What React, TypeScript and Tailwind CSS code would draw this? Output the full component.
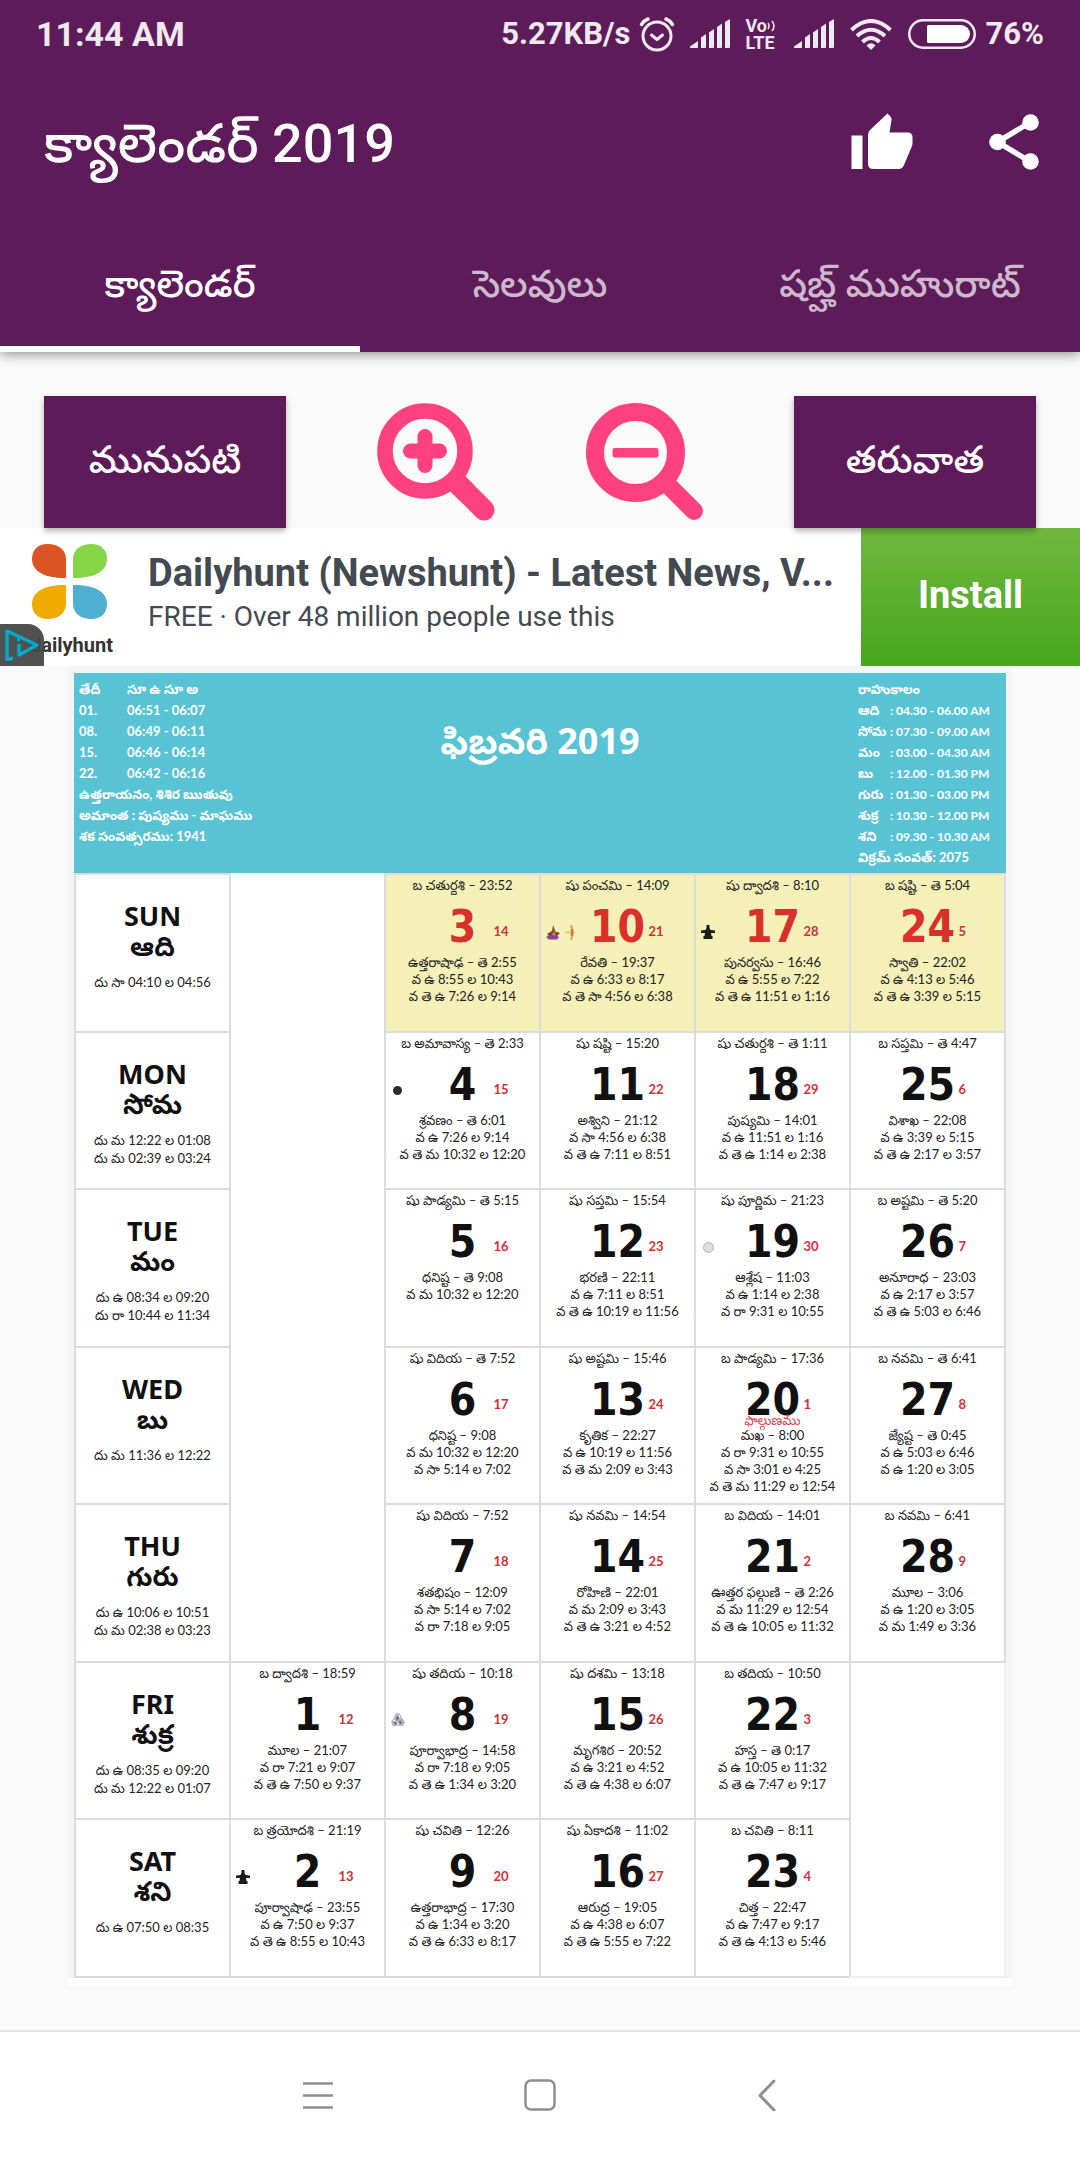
import type { ReactNode } from "react";

type Day = {
  n: number;
  sub: number;
  tithi: string;
  lines: string[];
  festival?: string;
  icon?: ReactNode;
};
type Week = { en: string; te: string; times: string[]; days: Day[] };

function Signal() {
  return (
    <svg className="h-[30px] w-10" viewBox="0 0 40 30" fill="currentColor" aria-hidden="true">
      <path d="M0 29v-1.500L8 22v6q0 1-1 1zM11 18.500l5-3.500v13q0 1-1 1h-4zM19 13.500l5-3.500v18q0 1-1 1h-4zM27 8l5-3.500V28q0 1-1 1h-4zM35 3l5-3v28q0 1-1 1h-4z" />
    </svg>
  );
}

function Lingam() {
  return (
    <svg className="size-[14px]" viewBox="0 0 14 14" fill="#1b1b1b" aria-hidden="true">
      <path d="M5.500 0h3v3l1 2 4.500.5v2.500H10l.5 3h1V14H2.500v-3h1L4 8H0V5.500L4.500 5l1-2z" />
    </svg>
  );
}

function Goddess() {
  return (
    <>
      <svg className="size-[15px]" viewBox="0 0 15 15" aria-hidden="true">
        <path d="M7 0l2 5 1 5H5l1-5z" fill="#8a5a3a" />
        <path d="M1 9l5-3 5 1 3 1-3 3H3z" fill="#6b4a3c" />
        <path d="M0 12q7-5 13 0l-2 2.500H3z" fill="#8d3f98" />
        <circle cx="8" cy="9" r="1.800" fill="#e0762c" />
      </svg>
      <svg className="ml-1 h-[15px] w-3" viewBox="0 0 12 15" fill="none" aria-hidden="true">
        <path d="M6 0q3 7 0 15" stroke="#e2a552" strokeWidth="2" />
        <path d="M0 7.500h10" stroke="#e9c06b" strokeWidth="1.500" />
        <path d="M7 4v7" stroke="#c97f3c" strokeWidth="2.500" />
      </svg>
    </>
  );
}

function NewMoon() {
  return <span className="mx-0.5 size-[9px] rounded-full bg-[#2b2b2b]" />;
}

function FullMoon() {
  return <span className="ml-0.5 size-[11px] rounded-full border border-[#b5b5b5] bg-[#dedede]" />;
}

function MoonSighting() {
  return (
    <svg className="size-[14px]" viewBox="0 0 14 14" aria-hidden="true">
      <path d="M5 0l4 1 2 4 3 4-2 4H2L0 9l3-4z" fill="#aeb4bc" />
      <path d="M6 3l2 2-3 3zM9 7l2 4-3-1zM3 9l3 1-2 2z" fill="#555e6b" />
      <path d="M8 2l1 3M2 8l3-1M7 9v4" stroke="#f3f4f6" />
    </svg>
  );
}

const weeks: Week[] = [
  {
    en: "SUN",
    te: "ఆది",
    times: ["దు సా 04:10 ల 04:56"],
    days: [
      { n: 3, sub: 14, tithi: "బ చతుర్దశి – 23:52", lines: ["ఉత్తరాషాఢ – తె 2:55", "వ ఉ 8:55 ల 10:43", "వ తె ఉ 7:26 ల 9:14"] },
      { n: 10, sub: 21, tithi: "షు పంచమి – 14:09", lines: ["రేవతి – 19:37", "వ ఉ 6:33 ల 8:17", "వ తె సా 4:56 ల 6:38"], icon: <Goddess /> },
      { n: 17, sub: 28, tithi: "షు ద్వాదశి – 8:10", lines: ["పునర్వసు – 16:46", "వ ఉ 5:55 ల 7:22", "వ తె ఉ 11:51 ల 1:16"], icon: <Lingam /> },
      { n: 24, sub: 5, tithi: "బ షష్టి – తె 5:04", lines: ["స్వాతి – 22:02", "వ ఉ 4:13 ల 5:46", "వ తె ఉ 3:39 ల 5:15"] },
    ],
  },
  {
    en: "MON",
    te: "సోమ",
    times: ["దు మ 12:22 ల 01:08", "దు మ 02:39 ల 03:24"],
    days: [
      { n: 4, sub: 15, tithi: "బ అమావాస్య – తె 2:33", lines: ["శ్రవణం – తె 6:01", "వ ఉ 7:26 ల 9:14", "వ తె మ 10:32 ల 12:20"], icon: <NewMoon /> },
      { n: 11, sub: 22, tithi: "షు షష్టి – 15:20", lines: ["అశ్విని – 21:12", "వ సా 4:56 ల 6:38", "వ తె ఉ 7:11 ల 8:51"] },
      { n: 18, sub: 29, tithi: "షు చతుర్దశి – తె 1:11", lines: ["పుష్యమి – 14:01", "వ ఉ 11:51 ల 1:16", "వ తె ఉ 1:14 ల 2:38"] },
      { n: 25, sub: 6, tithi: "బ సప్తమి – తె 4:47", lines: ["విశాఖ – 22:08", "వ ఉ 3:39 ల 5:15", "వ తె ఉ 2:17 ల 3:57"] },
    ],
  },
  {
    en: "TUE",
    te: "మం",
    times: ["దు ఉ 08:34 ల 09:20", "దు రా 10:44 ల 11:34"],
    days: [
      { n: 5, sub: 16, tithi: "షు పాడ్యమి – తె 5:15", lines: ["ధనిష్ట – తె 9:08", "వ మ 10:32 ల 12:20"] },
      { n: 12, sub: 23, tithi: "షు సప్తమి – 15:54", lines: ["భరణి – 22:11", "వ ఉ 7:11 ల 8:51", "వ తె ఉ 10:19 ల 11:56"] },
      { n: 19, sub: 30, tithi: "షు పూర్ణిమ – 21:23", lines: ["ఆశ్లేష – 11:03", "వ ఉ 1:14 ల 2:38", "వ రా 9:31 ల 10:55"], icon: <FullMoon /> },
      { n: 26, sub: 7, tithi: "బ అష్టమి – తె 5:20", lines: ["అనూరాధ – 23:03", "వ ఉ 2:17 ల 3:57", "వ తె ఉ 5:03 ల 6:46"] },
    ],
  },
  {
    en: "WED",
    te: "బు",
    times: ["దు మ 11:36 ల 12:22"],
    days: [
      { n: 6, sub: 17, tithi: "షు విదియ – తె 7:52", lines: ["ధనిష్ట – 9:08", "వ మ 10:32 ల 12:20", "వ సా 5:14 ల 7:02"] },
      { n: 13, sub: 24, tithi: "షు అష్టమి – 15:46", lines: ["కృతిక – 22:27", "వ ఉ 10:19 ల 11:56", "వ తె మ 2:09 ల 3:43"] },
      { n: 20, sub: 1, tithi: "బ పాడ్యమి – 17:36", festival: "ఫాల్గుణము", lines: ["మఖ – 8:00", "వ రా 9:31 ల 10:55", "వ సా 3:01 ల 4:25", "వ తె మ 11:29 ల 12:54"] },
      { n: 27, sub: 8, tithi: "బ నవమి – తె 6:41", lines: ["జ్యేష్ట – తె 0:45", "వ ఉ 5:03 ల 6:46", "వ ఉ 1:20 ల 3:05"] },
    ],
  },
  {
    en: "THU",
    te: "గురు",
    times: ["దు ఉ 10:06 ల 10:51", "దు మ 02:38 ల 03:23"],
    days: [
      { n: 7, sub: 18, tithi: "షు విదియ – 7:52", lines: ["శతభిషం – 12:09", "వ సా 5:14 ల 7:02", "వ రా 7:18 ల 9:05"] },
      { n: 14, sub: 25, tithi: "షు నవమి – 14:54", lines: ["రోహిణి – 22:01", "వ మ 2:09 ల 3:43", "వ తె ఉ 3:21 ల 4:52"] },
      { n: 21, sub: 2, tithi: "బ విదియ – 14:01", lines: ["ఊత్తర ఫల్గుణి – తె 2:26", "వ మ 11:29 ల 12:54", "వ తె ఉ 10:05 ల 11:32"] },
      { n: 28, sub: 9, tithi: "బ నవమి – 6:41", lines: ["మూల – 3:06", "వ ఉ 1:20 ల 3:05", "వ మ 1:49 ల 3:36"] },
    ],
  },
  {
    en: "FRI",
    te: "శుక్ర",
    times: ["దు ఉ 08:35 ల 09:20", "దు మ 12:22 ల 01:07"],
    days: [
      { n: 1, sub: 12, tithi: "బ ద్వాదశి – 18:59", lines: ["మూల – 21:07", "వ రా 7:21 ల 9:07", "వ తె ఉ 7:50 ల 9:37"] },
      { n: 8, sub: 19, tithi: "షు తదియ – 10:18", lines: ["పూర్వాభాద్ర – 14:58", "వ రా 7:18 ల 9:05", "వ తె ఉ 1:34 ల 3:20"], icon: <MoonSighting /> },
      { n: 15, sub: 26, tithi: "షు దశమి – 13:18", lines: ["మృగశిర – 20:52", "వ ఉ 3:21 ల 4:52", "వ తె ఉ 4:38 ల 6:07"] },
      { n: 22, sub: 3, tithi: "బ తదియ – 10:50", lines: ["హస్త – తె 0:17", "వ ఉ 10:05 ల 11:32", "వ తె ఉ 7:47 ల 9:17"] },
    ],
  },
  {
    en: "SAT",
    te: "శని",
    times: ["దు ఉ 07:50 ల 08:35"],
    days: [
      { n: 2, sub: 13, tithi: "బ త్రయోదశి – 21:19", lines: ["పూర్వాషాఢ – 23:55", "వ ఉ 7:50 ల 9:37", "వ తె ఉ 8:55 ల 10:43"], icon: <Lingam /> },
      { n: 9, sub: 20, tithi: "షు చవితి – 12:26", lines: ["ఉత్తరాభాద్ర – 17:30", "వ ఉ 1:34 ల 3:20", "వ తె ఉ 6:33 ల 8:17"] },
      { n: 16, sub: 27, tithi: "షు ఏకాదశి – 11:02", lines: ["ఆరుద్ర – 19:05", "వ ఉ 4:38 ల 6:07", "వ తె ఉ 5:55 ల 7:22"] },
      { n: 23, sub: 4, tithi: "బ చవితి – 8:11", lines: ["చిత్త – 22:47", "వ ఉ 7:47 ల 9:17", "వ తె ఉ 4:13 ల 5:46"] },
    ],
  },
];

const sunTimes = [
  ["తేదీ", "సూ ఉ సూ అ"],
  ["01.", "06:51 - 06:07"],
  ["08.", "06:49 - 06:11"],
  ["15.", "06:46 - 06:14"],
  ["22.", "06:42 - 06:16"],
];

const rahu = [
  ["ఆది", ": 04.30 - 06.00 AM"],
  ["సోమ", ": 07.30 - 09.00 AM"],
  ["మం", ": 03.00 - 04.30 AM"],
  ["బు", ": 12.00 - 01.30 PM"],
  ["గురు", ": 01.30 - 03.00 PM"],
  ["శుక్ర", ": 10.30 - 12.00 PM"],
  ["శని", ": 09.30 - 10.30 AM"],
];

function DayCell({ day, sunday }: { day: Day; sunday: boolean }) {
  return (
    <td className={sunday ? "border-2 border-[#dcdcdc] bg-[#f5f0b8] p-0 align-top" : "border-2 border-[#dcdcdc] p-0 align-top"}>
      <div className="pt-0.5 text-center">
        <p className="whitespace-nowrap leading-[17px]">{day.tithi}</p>
        <div className="relative mt-2.5 grid h-[46px] grid-cols-[1fr_62px_1fr] items-center">
          <span className="flex items-center pt-2.5 pl-[5px]">{day.icon}</span>
          <span
            className={
              sunday
                ? "font-['DejaVu_Sans_Condensed','DejaVu_Sans',sans-serif] text-[44px] leading-[46px] font-bold text-[#d9302a]"
                : "font-['DejaVu_Sans_Condensed','DejaVu_Sans',sans-serif] text-[44px] leading-[46px] font-bold text-[#111]"
            }
          >
            {day.n}
          </span>
          <span className="pt-2.5 text-left font-bold text-[#d22f37]">{day.sub}</span>
          {day.festival && (
            <span className="absolute inset-x-0 top-[35px] leading-[17px] text-[#e0414a]">{day.festival}</span>
          )}
        </div>
        <div className="mt-1 whitespace-nowrap leading-[17px]">
          {day.lines.map((l) => (
            <p key={l}>{l}</p>
          ))}
        </div>
      </div>
    </td>
  );
}

function Calendar() {
  return (
    <section className="mx-[68px] bg-[#f5f5f5] px-1.5 pt-[7px] font-['Lato','Noto_Sans_Telugu',sans-serif] text-[13px] text-[#222]">
      <div className="grid h-[200px] grid-cols-[1fr_auto_1fr] bg-[#59c3d6] pt-1.5 font-bold leading-[21px] text-white">
        <div className="pl-[5px] whitespace-nowrap">
          {sunTimes.map(([a, b]) => (
            <div key={a} className="grid grid-cols-[48px_1fr]">
              <span>{a}</span>
              <span>{b}</span>
            </div>
          ))}
          <p>ఉత్తరాయనం, శిశిర ఋతువు</p>
          <p>అమాంత : పుష్యము - మాఘము</p>
          <p>శక సంవత్సరము: 1941</p>
        </div>
        <h2 className="pt-10 font-['Noto_Sans','Noto_Sans_Telugu',sans-serif] text-[36px] leading-[44px] font-bold">
          ఫిబ్రవరి 2019
        </h2>
        <div className="w-[148px] justify-self-end whitespace-nowrap">
          <p>రాహుకాలం</p>
          {rahu.map(([a, b]) => (
            <div key={a} className="grid grid-cols-[32px_1fr]">
              <span>{a}</span>
              <span className="text-[12px]">{b}</span>
            </div>
          ))}
          <p>విక్రమ్ సంవత్: 2075</p>
        </div>
      </div>
      <table className="w-full table-fixed border-collapse bg-white">
        <tbody>
          {weeks.map((w, i) => (
            <tr key={w.en}>
              <th scope="row" className="border-2 border-[#dcdcdc] p-0 align-top font-normal">
                <div className={i % 2 === 0 ? "flex h-[156px] flex-col items-center pt-[26px]" : "flex h-[155px] flex-col items-center pt-[26px]"}>
                  <span className="font-['Noto_Sans','Noto_Sans_Telugu',sans-serif] text-[27px] leading-[30px] font-bold text-[#111]">
                    {w.en}
                  </span>
                  <span className="font-['Noto_Sans','Noto_Sans_Telugu',sans-serif] text-[27px] leading-[30px] font-bold text-[#111]">
                    {w.te}
                  </span>
                  <div className="pt-3 whitespace-nowrap leading-[18px]">
                    {w.times.map((t) => (
                      <p key={t}>{t}</p>
                    ))}
                  </div>
                </div>
              </th>
              {i === 0 && <td rowSpan={5} className="p-0" />}
              {w.days.map((d) => (
                <DayCell key={d.n} day={d} sunday={i === 0} />
              ))}
              {i === 5 && <td rowSpan={2} className="border-r-2 border-b-2 border-[#efefef] p-0" />}
            </tr>
          ))}
        </tbody>
      </table>
      <div className="-mx-1.5 h-2 bg-white" />
    </section>
  );
}

function Petal({ className }: { className: string }) {
  return (
    <svg className={className} viewBox="0 0 34 34" fill="currentColor" aria-hidden="true">
      <path d="M33 34Q34 34 34 33V15C34 5 25 0 16 0C6 0 0 6 0 15C0 27 12 34 33 34Z" />
    </svg>
  );
}

export default function App() {
  return (
    <div className="flex min-h-screen flex-col bg-[#fafafa] font-['Roboto','Noto_Sans_Telugu',sans-serif]">
      <header className="z-10 bg-[#5d1c59] text-white shadow-[0_2px_12px_rgba(0,0,0,0.45)]">
        <div className="flex h-[68px] items-center justify-between px-9 font-bold text-[#efe8ee]">
          <span className="text-[34px]">11:44 AM</span>
          <div className="flex items-center text-[31px]">
            <span>5.27KB/s</span>
            <svg className="ml-2 h-9 w-9" viewBox="0 0 36 36" fill="none" stroke="currentColor" strokeWidth="3" strokeLinecap="round" strokeLinejoin="round" aria-hidden="true">
              <circle cx="18" cy="20" r="14" />
              <path d="M12.500 19l5.500 4.500 5.500-4.500" />
              <path d="M2.500 8.500Q5 4.500 9 3M33.500 8.500Q31 4.500 27 3" strokeWidth="3.500" />
            </svg>
            <span className="ml-[15px]">
              <Signal />
            </span>
            <div className="ml-4 flex w-8 flex-col text-[18px] leading-[17px]">
              <span className="flex items-center">
                Vo
                <svg className="h-3 w-2" viewBox="0 0 8 12" fill="none" stroke="currentColor" strokeWidth="1.500" aria-hidden="true">
                  <path d="M1 3q2 3 0 6M5 1q4 5 0 10" />
                </svg>
              </span>
              <span>LTE</span>
            </div>
            <span className="ml-4">
              <Signal />
            </span>
            <svg className="ml-4 h-[31px] w-[42px]" viewBox="0 0 42 31" fill="none" stroke="currentColor" strokeWidth="4" aria-hidden="true">
              <path d="M1.500 11Q21-7 40.500 11M7 17Q21 4.500 35 17M12.500 23Q21 15 29.500 23" />
              <path d="M16.500 26.500Q21 22 25.500 26.500L21 31Z" fill="currentColor" stroke="none" />
            </svg>
            <svg className="ml-4 h-[30px] w-[68px]" viewBox="0 0 68 30" aria-hidden="true">
              <rect x="1.250" y="1.250" width="65.500" height="27.500" rx="13.750" fill="none" stroke="currentColor" strokeWidth="2.500" />
              <path d="M19 7.500q0-1.500 1.500-1.500H53a9 9 0 0 1 0 18H20.500q-1.500 0-1.500-1.500z" fill="#fff" />
            </svg>
            <span className="ml-2.5">76%</span>
          </div>
        </div>
        <div className="flex h-[148px] items-center justify-between pr-10 pl-11">
          <h1 className="pt-1 text-[54px] leading-[72px] font-medium">క్యాలెండర్ 2019</h1>
          <div className="flex items-center gap-[74px]">
            <button type="button" aria-label="ఇష్టం">
              <svg className="h-[58px] w-16" viewBox="0 1 64 58" fill="#fff" aria-hidden="true">
                <rect x="1.500" y="23.500" width="11" height="33.500" />
                <path d="M18 51.500V23q0-3 2-5L37.500 1.500l3 3q1.500 1.500 1 3.500L39.500 20.500H57.500q5 0 5 5V31q0 1.500-.5 3L54 53q-1.500 4-5.500 4H23.500Q18 57 18 51.500Z" />
              </svg>
            </button>
            <button type="button" aria-label="షేర్">
              <svg className="h-[58px] w-[52px]" viewBox="0 0 52 58" aria-hidden="true">
                <path d="M42 9.500L9.500 29L42 48.500" fill="none" stroke="#fff" strokeWidth="5.500" />
                <circle cx="9.500" cy="29" r="8.300" fill="#fff" />
                <circle cx="42.500" cy="9.500" r="8.300" fill="#fff" />
                <circle cx="42.500" cy="48.500" r="8.300" fill="#fff" />
              </svg>
            </button>
          </div>
        </div>
        <nav className="grid h-[136px] grid-cols-3 text-[38px] font-medium">
          <button type="button" className="border-b-[6px] border-white pt-1.5">క్యాలెండర్</button>
          <button type="button" className="border-b-[6px] border-transparent pt-1.5 text-[#cdb9cc]">సెలవులు</button>
          <button type="button" className="border-b-[6px] border-transparent pt-1.5 text-[#cdb9cc]">షబ్హ్ ముహురాట్</button>
        </nav>
      </header>

      <main className="flex-1">
        <div className="flex items-center justify-between px-11 pt-11">
          <button type="button" className="relative h-[132px] w-[242px] bg-[#5d1c59] pb-1 text-[38px] font-medium text-white shadow-[0_3px_6px_rgba(0,0,0,0.3)]">
            మునుపటి
          </button>
          <button type="button" aria-label="పెద్దది చేయి">
            <svg className="size-[118px]" viewBox="0 0 118 118" aria-hidden="true">
              <circle cx="48" cy="48" r="40" fill="none" stroke="#ff4081" strokeWidth="15.500" />
              <path d="M82 82L107 107" stroke="#ff4081" strokeWidth="21" strokeLinecap="round" />
              <path d="M78 78L90 90" stroke="#ff4081" strokeWidth="21" />
              <path d="M48 33.500V62.500M33.500 48H62.500" stroke="#ff4081" strokeWidth="15" strokeLinecap="round" />
            </svg>
          </button>
          <button type="button" aria-label="చిన్నది చేయి">
            <svg className="size-[118px]" viewBox="-1 0 118 118" aria-hidden="true">
              <circle cx="49.500" cy="49.500" r="40.500" fill="none" stroke="#ff4081" strokeWidth="18" />
              <path d="M84 84L108 108" stroke="#ff4081" strokeWidth="18" strokeLinecap="round" />
              <rect x="26.500" y="45" width="46" height="9.500" rx="2" fill="#ff4081" />
            </svg>
          </button>
          <button type="button" className="relative h-[132px] w-[242px] bg-[#5d1c59] pb-1 text-[38px] font-medium text-white shadow-[0_3px_6px_rgba(0,0,0,0.3)]">
            తరువాత
          </button>
        </div>

        <aside className="flex h-[138px] bg-white">
          <div className="relative w-[148px] shrink-0 pt-4 pl-8">
            <div className="grid w-[74px] grid-cols-2 gap-[7px]">
              <Petal className="size-[34px] text-[#db5424]" />
              <Petal className="size-[34px] -scale-x-100 text-[#86d547]" />
              <Petal className="size-[34px] -scale-y-100 text-[#f0ab00]" />
              <Petal className="size-[34px] -scale-100 text-[#50aed0]" />
            </div>
            <span className="absolute right-[35px] bottom-1.5 text-[20px] leading-[30px] font-bold text-[#333]">dailyhunt</span>
            <span className="absolute bottom-0 left-0 flex h-[42px] w-11 items-center rounded-tr-2xl bg-[#484848]/95">
              <svg className="ml-1 h-8 w-9" viewBox="0 0 36 32" fill="none" stroke="#00abc8" strokeWidth="3.500" strokeLinejoin="round" aria-hidden="true">
                <path d="M9 29L3 31V2L33 16L15 26V15" />
                <circle cx="14.500" cy="10.500" r="1.200" fill="#00abc8" strokeWidth="1.500" />
              </svg>
            </span>
          </div>
          <div className="flex min-w-0 flex-1 flex-col pt-[21px] text-[#444a51]">
            <p className="text-[38px] leading-[48px] font-bold whitespace-nowrap">Dailyhunt (Newshunt) - Latest News, V...</p>
            <p className="text-[28px] leading-10">FREE · Over 48 million people use this</p>
          </div>
          <button type="button" className="w-[219px] shrink-0 bg-linear-to-b from-[#6eb83e] to-[#48a51c] pb-1 text-[38px] font-bold text-white">
            Install
          </button>
        </aside>

        <Calendar />
      </main>

      <footer className="grid h-[130px] grid-cols-[1fr_192px_1fr] items-center border-t-2 border-[#e3e3e3] bg-white pb-0.5 text-[#8f8f8f]">
        <button type="button" aria-label="ఇటీవలి" className="mr-[110px] justify-self-end">
          <svg className="size-8" viewBox="0 0 32 32" stroke="currentColor" strokeWidth="2.500" aria-hidden="true">
            <path d="M1 4.500H31M1 16.500H31M1 28.500H31" />
          </svg>
        </button>
        <button type="button" aria-label="హోమ్" className="justify-self-center">
          <svg className="size-8" viewBox="0 0 32 32" fill="none" stroke="currentColor" strokeWidth="2.500" aria-hidden="true">
            <rect x="1.500" y="1.500" width="29" height="29" rx="5.500" />
          </svg>
        </button>
        <button type="button" aria-label="వెనుకకు" className="ml-[115px] justify-self-start">
          <svg className="size-8" viewBox="0 0 32 32" fill="none" stroke="currentColor" strokeWidth="3" strokeLinejoin="round" strokeLinecap="round" aria-hidden="true">
            <path d="M23 2L9 16.500L23 31" />
          </svg>
        </button>
      </footer>
    </div>
  );
}
